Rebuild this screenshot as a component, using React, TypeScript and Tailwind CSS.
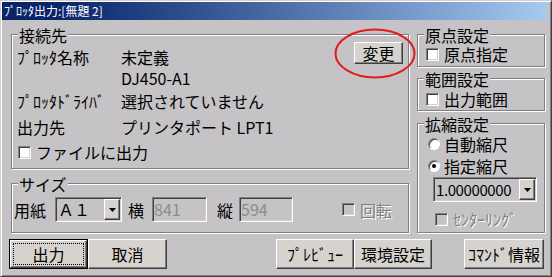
import React from "react";

const BG = "bg-[#c6c3c6]";

function Group({ title, className = "", children }: { title: string; className?: string; children?: React.ReactNode }) {
  return (
    <div className={`border border-[#808080] shadow-[inset_1px_1px_0_#fff,1px_1px_0_#fff] ${className}`}>
      <div className={`-mt-[8px] ml-[6px] px-[1px] w-fit h-[16px] leading-[16px] ${BG}`}>{title}</div>
      {children}
    </div>
  );
}

function Check({ label, disabled = false, className = "" }: { label: string; disabled?: boolean; className?: string }) {
  return (
    <div className={`flex items-center h-[16px] ${className}`}>
      <span
        className={`w-[13px] h-[13px] shrink-0 border border-t-[#808080] border-l-[#808080] border-r-white border-b-white shadow-[inset_1px_1px_0_#404040,inset_-1px_-1px_0_#d4d0c8] ${
          disabled ? "bg-[#c6c3c6]" : "bg-white"
        }`}
      />
      <span
        className={`ml-[5px] leading-[16px] whitespace-nowrap ${
          disabled ? "text-[#808080] [text-shadow:1px_1px_0_#fff]" : ""
        }`}
      >
        {label}
      </span>
    </div>
  );
}

function Radio({ label, checked = false, className = "" }: { label: string; checked?: boolean; className?: string }) {
  return (
    <div className={`flex items-center h-[16px] ${className}`}>
      <span className="w-[12px] h-[12px] shrink-0 rounded-full bg-white border border-t-[#808080] border-l-[#808080] border-r-white border-b-white shadow-[inset_1px_1px_0_#404040] flex items-center justify-center">
        {checked && <span className="w-[4px] h-[4px] rounded-full bg-black" />}
      </span>
      <span className="ml-[4px] leading-[16px] whitespace-nowrap">{label}</span>
    </div>
  );
}

function Arrow() {
  return (
    <svg width="7" height="4" viewBox="0 0 7 4">
      <path d="M0 0h7L3.5 4z" fill="#000" />
    </svg>
  );
}

function Combo({ value, className = "", textClass = "" }: { value: string; className?: string; textClass?: string }) {
  return (
    <div
      className={`flex h-[25px] border border-t-[#808080] border-l-[#808080] border-r-white border-b-white shadow-[inset_1px_1px_0_#404040,inset_-1px_-1px_0_#d4d0c8] p-[1px] ${BG} ${className}`}
    >
      <div className={`flex-1 pl-[1px] leading-[21px] whitespace-nowrap ${textClass}`}>{value}</div>
      <div className="w-[16px] shrink-0 flex items-center justify-center bg-[#d6d3ce] border border-t-white border-l-white border-r-[#404040] border-b-[#404040] shadow-[inset_-1px_-1px_0_#808080]">
        <Arrow />
      </div>
    </div>
  );
}

function Field({ value, className = "" }: { value: string; className?: string }) {
  return (
    <div
      className={`h-[25px] border border-t-[#808080] border-l-[#808080] border-r-white border-b-white shadow-[inset_1px_1px_0_#404040,inset_-1px_-1px_0_#d4d0c8] pl-[1px] leading-[23px] text-[#8c8c8c] ${BG} ${className}`}
    >
      {value}
    </div>
  );
}

function Btn({ children, className = "", def = false }: { children: React.ReactNode; className?: string; def?: boolean }) {
  const face =
    "flex items-center justify-center bg-[#d6d3ce] border border-t-white border-l-white border-r-[#404040] border-b-[#404040] shadow-[inset_-1px_-1px_0_#808080] whitespace-nowrap";
  if (def)
    return (
      <div className={`border border-black ${className}`}>
        <div className={`${face} w-full h-full p-[2px]`}>
          <div className="w-full h-full border border-dotted border-black flex items-center justify-center">{children}</div>
        </div>
      </div>
    );
  return <div className={`${face} ${className}`}>{children}</div>;
}

function Row({ label, value, className = "" }: { label: string; value: string; className?: string }) {
  return (
    <div className={`flex h-[18px] leading-[18px] whitespace-nowrap ${className}`}>
      <span className="w-[104px]">{label}</span>
      <span>{value}</span>
    </div>
  );
}

export default function App() {
  return (
    <div
      className={`relative w-[552px] h-[277px] overflow-hidden ${BG} border border-t-[#d4d0c8] border-l-[#d4d0c8] border-r-[#404040] border-b-[#404040] shadow-[inset_1px_1px_0_#fff,inset_-1px_-1px_0_#808080] pt-[1px] pl-[1px] pr-[4px] flex flex-col text-[16px] text-black font-['Noto_Sans_CJK_JP','Noto_Sans',sans-serif]`}
    >
      {/* title */}
      <div className="h-[18px] bg-gradient-to-r from-[#0a246a] from-[10%] to-[#a6caf0] text-white text-[12px] leading-[18px] pl-[2px] whitespace-nowrap">
        ﾌﾟﾛｯﾀ出力:[無題 2]
      </div>

      <div className="flex mt-[14px] pl-[9px] gap-[8px]">
        {/* left */}
        <div className="w-[398px] flex flex-col">
          <Group title="接続先" className="h-[135px]">
            <div className="flex pl-[5px] pr-[5px]">
              <div className="flex-1">
                <Row label="ﾌﾟﾛｯﾀ名称" value="未定義" className="mt-[5px]" />
                <div className="mt-[3px] pl-[104px] h-[18px] leading-[18px]">DJ450-A1</div>
              </div>
              <Btn className="w-[49px] h-[22px] -mt-[1px]">変更</Btn>
            </div>
            <Row label="ﾌﾟﾛｯﾀﾄﾞﾗｲﾊﾞ" value="選択されていません" className="mt-[5px] pl-[5px]" />
            <Row label="出力先" value="プリンタポート LPT1" className="mt-[8px] pl-[5px]" />
            <Check label="ファイルに出力" className="mt-[8px] pl-[6px]" />
          </Group>

          <Group title="サイズ" className="h-[50px] mt-[14px]">
            <div className="flex items-center h-[25px] mt-[5px] pl-[2px] whitespace-nowrap">
              <span>用紙</span>
              <Combo value="Ａ１" className="ml-[9px] w-[67px]" />
              <span className="ml-[6px]">横</span>
              <Field value="841" className="ml-[8px] w-[55px]" />
              <span className="ml-[10px]">縦</span>
              <Field value="594" className="ml-[6px] w-[54px]" />
              <Check label="回転" disabled className="ml-[49px]" />
            </div>
          </Group>
        </div>

        {/* right */}
        <div className="w-[128px] flex flex-col">
          <Group title="原点設定" className="h-[33px]">
            <Check label="原点指定" className="mt-[3px] pl-[8px]" />
          </Group>
          <Group title="範囲設定" className="h-[33px] mt-[11px]">
            <Check label="出力範囲" className="mt-[4px] pl-[8px]" />
          </Group>
          <Group title="拡縮設定" className="h-[110px] mt-[12px]">
            <Radio label="自動縮尺" className="mt-[4px] pl-[10px]" />
            <Radio label="指定縮尺" checked className="mt-[6px] pl-[10px]" />
            <Combo value="1.00000000" textClass="text-[15px] tracking-[-0.4px]" className="mt-[3px] ml-[15px] w-[104px]" />
            <Check label="ｾﾝﾀｰﾘﾝｸﾞ" disabled className="mt-[9px] pl-[17px]" />
          </Group>
        </div>
      </div>

      {/* buttons */}
      <div className="flex mt-[6px] pl-[7px]">
        <Btn def className="w-[79px] h-[30px]">出力</Btn>
        <Btn className="w-[79px] h-[30px]">取消</Btn>
        <Btn className="w-[78px] h-[30px] ml-[109px]">ﾌﾟﾚﾋﾞｭｰ</Btn>
        <Btn className="w-[78px] h-[30px]">環境設定</Btn>
        <Btn className="w-[80px] h-[30px] ml-[32px]">ｺﾏﾝﾄﾞ情報</Btn>
      </div>

      {/* annotation */}
      <svg className="absolute left-[333px] top-[27px]" width="82" height="51" viewBox="0 0 82 51">
        <ellipse cx="41" cy="25.5" rx="39.5" ry="24" fill="none" stroke="#e01c1c" strokeWidth="2" />
      </svg>
    </div>
  );
}
